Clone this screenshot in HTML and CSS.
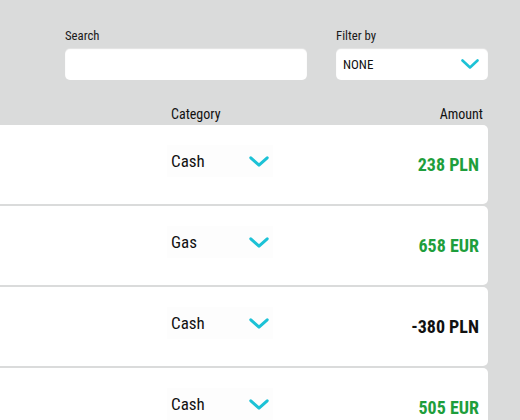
FILE: index.html
```html
<!DOCTYPE html>
<html>
<head>
<meta charset="utf-8">
<link rel="stylesheet" href="styles.css">
</head>
<body>
<div class="page">
  <div class="filters">
    <div class="field search-field">
      <label class="label">Search</label>
      <div class="input"></div>
    </div>
    <div class="field filter-field">
      <label class="label">Filter by</label>
      <div class="input select">
        <span class="select-text">NONE</span>
        <svg class="chev chev-sm" viewBox="0 0 18 10"><path d="M1.5 1.5 L9 8.5 L16.5 1.5" fill="none" stroke="#1cc2d6" stroke-width="2.6" stroke-linecap="round" stroke-linejoin="round"/></svg>
      </div>
    </div>
  </div>
  <div class="head">
    <span class="head-cat">Category</span>
    <span class="head-amt">Amount</span>
  </div>
  <div class="list">
    <div class="card">
      <div class="cat"><span class="cat-text">Cash</span><svg class="chev" viewBox="0 0 20 11"><path d="M1.8 1.8 L10 9.2 L18.2 1.8" fill="none" stroke="#1cc2d6" stroke-width="3" stroke-linecap="round" stroke-linejoin="round"/></svg></div>
      <div class="amt pos">238 PLN</div>
    </div>
    <div class="card">
      <div class="cat"><span class="cat-text">Gas</span><svg class="chev" viewBox="0 0 20 11"><path d="M1.8 1.8 L10 9.2 L18.2 1.8" fill="none" stroke="#1cc2d6" stroke-width="3" stroke-linecap="round" stroke-linejoin="round"/></svg></div>
      <div class="amt pos">658 EUR</div>
    </div>
    <div class="card">
      <div class="cat"><span class="cat-text">Cash</span><svg class="chev" viewBox="0 0 20 11"><path d="M1.8 1.8 L10 9.2 L18.2 1.8" fill="none" stroke="#1cc2d6" stroke-width="3" stroke-linecap="round" stroke-linejoin="round"/></svg></div>
      <div class="amt neg">-380 PLN</div>
    </div>
    <div class="card">
      <div class="cat"><span class="cat-text">Cash</span><svg class="chev" viewBox="0 0 20 11"><path d="M1.8 1.8 L10 9.2 L18.2 1.8" fill="none" stroke="#1cc2d6" stroke-width="3" stroke-linecap="round" stroke-linejoin="round"/></svg></div>
      <div class="amt pos">505 EUR</div>
    </div>
  </div>
</div>
</body>
</html>
```
FILE: styles.css
```css
html, body {
  margin: 0;
  padding: 0;
  background: #dadbdb;
  overflow: hidden;
}
body {
  font-family: "Roboto Condensed", Roboto, "Liberation Sans", sans-serif;
  color: #111;
  width: 520px;
  height: 420px;
}
.page {
  padding-top: 28px;
}
.filters {
  display: flex;
  padding-left: 65px;
  gap: 29px;
}
.field {
  display: flex;
  flex-direction: column;
  gap: 5px;
}
.search-field { width: 242px; }
.filter-field { width: 152px; }
.label {
  font-size: 12.75px;
  line-height: 15px;
  color: #1a1a1a;
}
.input {
  height: 32px;
  background: #fff;
  border-radius: 5px;
  box-shadow: inset 0 1px 1px rgba(0,0,0,0.12);
  box-sizing: border-box;
}
.select {
  display: flex;
  align-items: center;
  justify-content: space-between;
  padding: 0 9px 0 7px;
}
.select-text {
  font-size: 13px;
  color: #111;
}
.chev {
  width: 20px;
  height: 11px;
  display: block;
}
.chev-sm {
  width: 18px;
  height: 10px;
}
.head {
  display: flex;
  justify-content: space-between;
  width: 483px;
  margin-top: 26px;
  font-size: 14px;
  line-height: 16px;
}
.head-cat { margin-left: 171px; }
.list {
  display: flex;
  flex-direction: column;
  gap: 2px;
  margin-top: 3px;
  margin-left: -10px;
  width: 498px;
}
.card {
  height: 79px;
  background: #fff;
  border-radius: 5px;
  display: flex;
  align-items: center;
  padding-right: 9px;
  box-sizing: border-box;
}
.cat {
  margin-left: 177px;
  width: 106px;
  height: 32px;
  margin-top: -7px;
  background: #fdfdfd;
  display: flex;
  align-items: center;
  box-sizing: border-box;
  padding-left: 4px;
}
.cat-text {
  font-size: 17px;
  width: 78px;
}
.amt {
  margin-left: auto;
  font-size: 18px;
  font-weight: 700;
}
.pos { color: #1e9e3c; }
.neg { color: #111; }
```
